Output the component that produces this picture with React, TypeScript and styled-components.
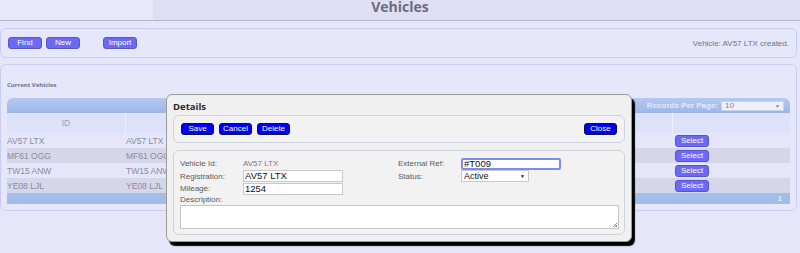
import React from "react";
import styled, { createGlobalStyle } from "styled-components";

const GlobalStyle = createGlobalStyle`
  html, body {
    margin: 0;
    padding: 0;
    background: #e6e6fa;
    font-family: "Liberation Sans", Arial, sans-serif;
  }
`;

const vehicles = ["AV57 LTX", "MF61 OGG", "TW15 ANW", "YE08 LJL"];

const Page = styled.div`
  position: relative;
  width: 800px;
  height: 253px;
  overflow: hidden;
`;

const Header = styled.div`
  display: grid;
  grid-template-columns: 153px 1fr 153px;
  height: 20px;
  border-bottom: 1px solid #b4b4cc;
  background: #dedef5;
`;

const HeaderSide = styled.div<{ light?: boolean }>`
  background: ${(p) => (p.light ? "#e8e8fa" : "#dedef5")};
`;

const Title = styled.h1`
  margin: 0;
  font-family: "Open Sans", sans-serif;
  font-size: 14px;
  font-weight: 700;
  line-height: 13px;
  color: #6c6c80;
  text-align: center;
`;

const Content = styled.div`
  display: flex;
  flex-direction: column;
  gap: 6px;
  padding: 7px 3px 0 0;
`;

const Panel = styled.div`
  border: 1px solid #c9cdf2;
  border-radius: 6px;
  background: #e7e7fb;
`;

const Toolbar = styled(Panel)`
  display: flex;
  align-items: center;
  height: 28px;
  padding: 0 7px;
`;

const PurpleButton = styled.button<{ gap?: number }>`
  width: 34px;
  height: 12px;
  margin-left: ${(p) => p.gap ?? 0}px;
  padding: 0;
  border: 1px solid #5656c8;
  border-radius: 3px;
  background: #6a6af4;
  color: #fff;
  font-family: "Liberation Sans", Arial, sans-serif;
  font-size: 8px;
  line-height: 10px;
`;

const Message = styled.span`
  margin-left: auto;
  color: #727286;
  font-size: 8px;
`;

const TablePanel = styled(Panel)`
  padding: 16px 6px 6px;
`;

const SectionLabel = styled.div`
  margin-bottom: 9px;
  font-family: "Open Sans", sans-serif;
  font-size: 6px;
  font-weight: 700;
  color: #6e6e84;
`;

const TopBar = styled.div`
  display: flex;
  align-items: center;
  justify-content: flex-end;
  height: 15px;
  padding-right: 6px;
  border-radius: 6px 6px 0 0;
  background: linear-gradient(#b6c9f0, #9bb7e7);
`;

const PagerLabel = styled.span`
  margin-right: 3px;
  color: #e4ebfb;
  font-size: 8px;
  font-weight: 700;
`;

const PagerSelect = styled.div`
  display: flex;
  align-items: center;
  justify-content: space-between;
  box-sizing: border-box;
  width: 63px;
  height: 10px;
  padding: 0 3px;
  border: 1px solid #c8d2ee;
  background: #eef0fb;
  color: #7e7e96;
  font-size: 8px;
`;

const Row = styled.div<{ shade?: "head" | "odd" | "even" }>`
  display: grid;
  grid-template-columns: 119px 1fr 117px;
  align-items: center;
  height: ${(p) => (p.shade === "head" ? 20 : 15)}px;
  background: ${(p) =>
    p.shade === "head" ? "#dde1f9" : p.shade === "even" ? "#d6d6ea" : "#e6e6fa"};
`;

const Cell = styled.div<{ center?: boolean; divider?: boolean }>`
  height: 100%;
  display: flex;
  align-items: center;
  justify-content: ${(p) => (p.center ? "center" : "flex-start")};
  border-right: ${(p) => (p.divider ? "1px solid #eef0fc" : "none")};
  color: #8b8b9c;
  font-size: 8.5px;
`;

const HeadCell = styled(Cell)`
  color: #8e9fd4;
`;

const SelectCell = styled(Cell)`
  padding-left: 2px;
`;

const Footer = styled.div`
  display: flex;
  align-items: center;
  justify-content: flex-end;
  height: 11px;
  padding-right: 8px;
  background: #a2bdea;
  color: #e8eefc;
  font-size: 8px;
  font-weight: 700;
`;

const Dialog = styled.div`
  position: absolute;
  left: 166px;
  top: 94px;
  box-sizing: border-box;
  width: 466px;
  height: 148px;
  padding: 3px 6px 6px;
  border: 1px solid #9a9a9a;
  border-radius: 6px;
  background: #f0f0f0;
  box-shadow: 3px 4px 1px #000;
`;

const DialogTitle = styled.div`
  height: 17px;
  font-family: "Open Sans", sans-serif;
  font-size: 9.5px;
  font-weight: 700;
  line-height: 17px;
  color: #2a2a2a;
`;

const Frame = styled.div`
  box-sizing: border-box;
  border: 1px solid #c9d3df;
  border-radius: 6px;
  background: #f2f2f2;
`;

const ActionBar = styled(Frame)`
  display: flex;
  align-items: center;
  gap: 5px;
  height: 28px;
  padding: 0 7px;
  margin-bottom: 7px;
`;

const BlueButton = styled.button<{ push?: boolean }>`
  width: 33px;
  height: 12px;
  margin-left: ${(p) => (p.push ? "auto" : "0")};
  padding: 0;
  border: 1px solid #101040;
  border-radius: 3px;
  background: #0000f8;
  color: #fff;
  font-family: "Liberation Sans", Arial, sans-serif;
  font-size: 8px;
  line-height: 10px;
`;

const FormFrame = styled(Frame)`
  height: 85px;
  padding: 6px 5px 0 6px;
`;

const FormGrid = styled.div`
  display: grid;
  grid-template-columns: 63px 155px 63px 1fr;
  grid-template-rows: 13px 12.5px 12.5px;
  align-items: center;
`;

const Label = styled.span`
  color: #5a5a5a;
  font-size: 8px;
`;

const Value = styled.span`
  color: #7a7a7a;
  font-size: 8px;
`;

const TextInput = styled.div<{ focus?: boolean; w: number }>`
  box-sizing: border-box;
  width: ${(p) => p.w}px;
  height: 12px;
  padding-left: 1px;
  border: ${(p) => (p.focus ? "2px solid #7b8ef0" : "1px solid #c8c8c8")};
  border-radius: ${(p) => (p.focus ? "2px" : "0")};
  background: #fff;
  color: #111;
  font-size: 9.5px;
  line-height: ${(p) => (p.focus ? 8 : 10)}px;
`;

const Squiggle = styled.span`
  text-decoration: underline wavy #e05050;
  text-decoration-thickness: 1px;
  text-underline-offset: 1px;
`;

const StatusSelect = styled(TextInput)`
  display: flex;
  align-items: center;
  justify-content: space-between;
  padding: 0 3px 0 2px;
  font-size: 9px;

  &::after {
    content: "▼";
    font-size: 5px;
  }
`;

const DescLabel = styled(Label)`
  display: block;
  margin-top: 1px;
  height: 9px;
  line-height: 8px;
`;

const TextArea = styled.div`
  position: relative;
  box-sizing: border-box;
  height: 24px;
  border: 1px solid #c4c4c4;
  background: #fff;

  &::after {
    content: "";
    position: absolute;
    right: 1px;
    bottom: 1px;
    width: 5px;
    height: 5px;
    background: linear-gradient(135deg, transparent 55%, #888 55%, #888 65%, transparent 65%, transparent 80%, #888 80%);
  }
`;

export default function App() {
  return (
    <Page>
      <GlobalStyle />
      <Header>
        <HeaderSide light />
        <Title>Vehicles</Title>
        <HeaderSide />
      </Header>
      <Content>
        <Toolbar>
          <PurpleButton>Find</PurpleButton>
          <PurpleButton gap={4}>New</PurpleButton>
          <PurpleButton gap={23}>Import</PurpleButton>
          <Message>Vehicle: AV57 LTX created.</Message>
        </Toolbar>
        <TablePanel>
          <SectionLabel>Current Vehicles</SectionLabel>
          <TopBar>
            <PagerLabel>Records Per Page:</PagerLabel>
            <PagerSelect>
              <span>10</span>
              <span style={{ fontSize: 5 }}>▼</span>
            </PagerSelect>
          </TopBar>
          <Row shade="head">
            <HeadCell center divider>ID</HeadCell>
            <HeadCell divider />
            <HeadCell />
          </Row>
          {vehicles.map((v, i) => (
            <Row key={v} shade={i % 2 ? "even" : "odd"}>
              <Cell>{v}</Cell>
              <Cell>{v}</Cell>
              <SelectCell>
                <PurpleButton>Select</PurpleButton>
              </SelectCell>
            </Row>
          ))}
          <Footer>1</Footer>
        </TablePanel>
      </Content>

      <Dialog>
        <DialogTitle>Details</DialogTitle>
        <ActionBar>
          <BlueButton>Save</BlueButton>
          <BlueButton>Cancel</BlueButton>
          <BlueButton>Delete</BlueButton>
          <BlueButton push>Close</BlueButton>
        </ActionBar>
        <FormFrame>
          <FormGrid>
            <Label>Vehicle Id:</Label>
            <Value>AV57 LTX</Value>
            <Label>External Ref:</Label>
            <TextInput w={100} focus>
              #<Squiggle>T009</Squiggle>
            </TextInput>
            <Label>Registration:</Label>
            <TextInput w={100}>AV57 LTX</TextInput>
            <Label>Status:</Label>
            <StatusSelect w={68}>Active</StatusSelect>
            <Label>Mileage:</Label>
            <TextInput w={100}>1254</TextInput>
            <span />
            <span />
          </FormGrid>
          <DescLabel>Description:</DescLabel>
          <TextArea />
        </FormFrame>
      </Dialog>
    </Page>
  );
}
